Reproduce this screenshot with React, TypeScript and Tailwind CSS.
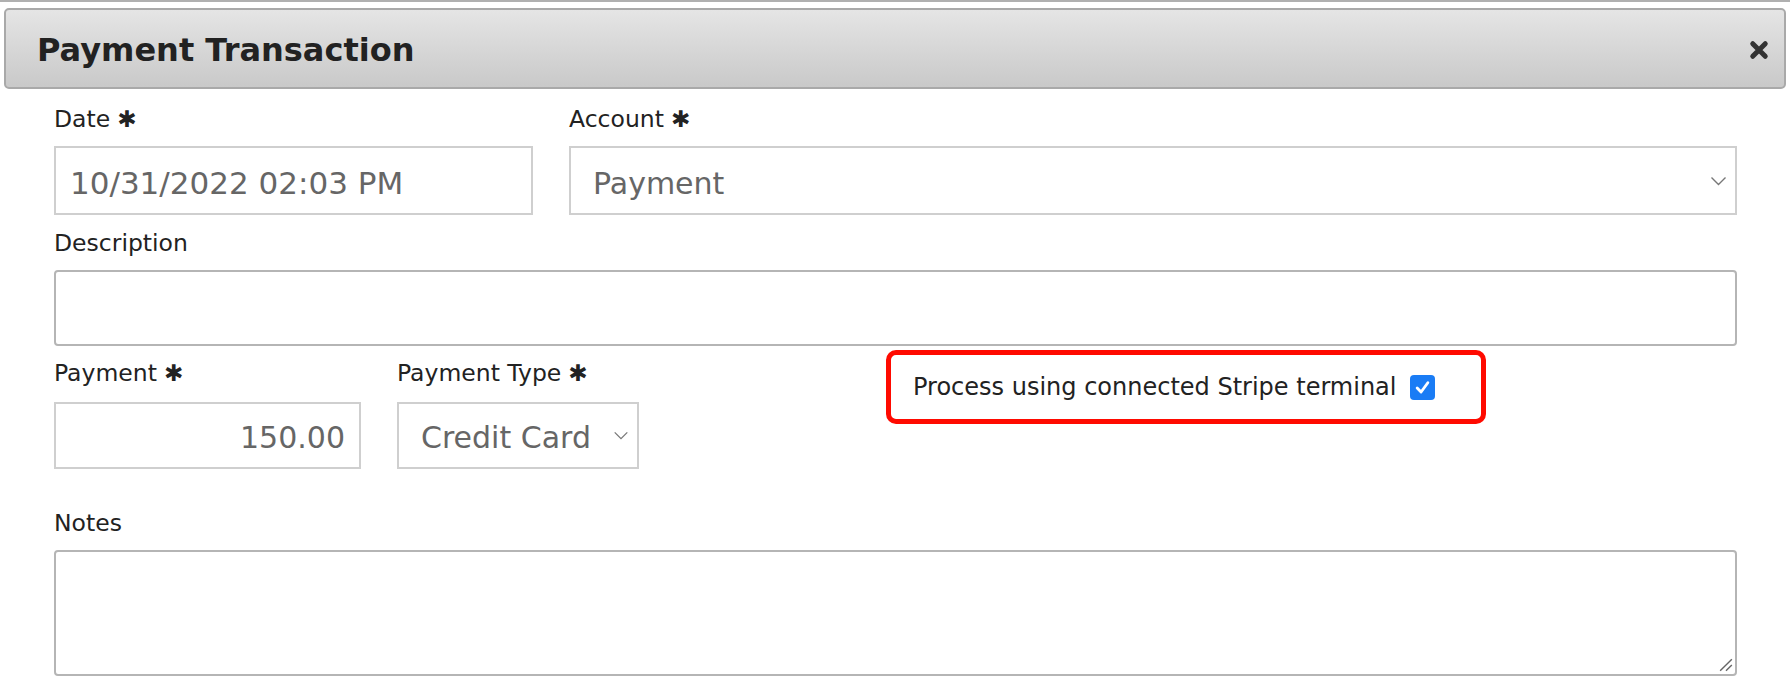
import React from 'react'

const font = "font-['DejaVu_Sans','Verdana',sans-serif]"

function Star() {
  return <span className="ml-[7px] text-[23px] text-[#222] font-bold">✱</span>
}

function Chevron({ className = '' }: { className?: string }) {
  return (
    <svg viewBox="0 0 16 10" className={className} fill="none" stroke="#777" strokeWidth="1.4">
      <path d="M1 1.5 L8 8.5 L15 1.5" />
    </svg>
  )
}

function Label({ children }: { children: React.ReactNode }) {
  return <div className="h-[26px] leading-[26px] text-[23.5px] text-[#222] flex items-center whitespace-nowrap">{children}</div>
}

export default function App() {
  return (
    <div className={`w-[1790px] h-[688px] bg-white overflow-hidden ${font}`}>
      <div className="h-[2px] bg-[#b0b0b0]" />
      {/* header */}
      <div className="mt-[6px] mx-[4px] h-[81px] rounded-[5px] border-2 border-[#a9a9a9] bg-gradient-to-b from-[#e5e5e5] to-[#c9c9c9] flex items-center justify-between pl-[31px] pr-[15px]">
        <h1 className="pt-[2px] text-[32px] font-bold text-[#222]">Payment Transaction</h1>
        <svg viewBox="0 0 16 16" className="mt-[2px] w-[20px] h-[20px]">
          <path d="M3 3 L13 13 M13 3 L3 13" stroke="#333" strokeWidth="4" strokeLinecap="round" />
        </svg>
      </div>

      <div className="px-[54px] pr-[53px]">
        {/* row 1 */}
        <div className="mt-[17px] flex gap-[36px]">
          <div className="w-[479px]">
            <Label>Date<Star /></Label>
            <div className="mt-[14px] h-[69px] border-2 border-[#cfcfcf] flex items-center pt-[5px] px-[14px] text-[31px] text-[#666]">
              10/31/2022 02:03 PM
            </div>
          </div>
          <div className="flex-1">
            <Label>Account<Star /></Label>
            <div className="mt-[14px] h-[69px] border-2 border-[#cfcfcf] flex items-center justify-between pl-[22px] pr-[8px] text-[30px] text-[#666]">
              <span className="pt-[5px]">Payment</span>
              <Chevron className="w-[17px] h-[10px]" />
            </div>
          </div>
        </div>

        {/* row 2 */}
        <div className="mt-[15px]">
          <Label>Description</Label>
          <div className="mt-[14px] h-[76px] rounded-[4px] border-2 border-[#b5b5b5]" />
        </div>

        {/* row 3 */}
        <div className="flex items-start">
          <div className="mt-[14px] w-[307px]">
            <Label>Payment<Star /></Label>
            <div className="mt-[16px] h-[67px] border-2 border-[#cfcfcf] flex items-center justify-end pt-[4px] px-[14px] text-[30px] text-[#666]">
              150.00
            </div>
          </div>
          <div className="mt-[14px] ml-[36px] w-[242px]">
            <Label>Payment Type<Star /></Label>
            <div className="mt-[16px] h-[67px] border-2 border-[#cfcfcf] flex items-center justify-between pl-[22px] pr-[8px] text-[30px] text-[#666] whitespace-nowrap">
              <span className="pt-[4px]">Credit Card</span>
              <Chevron className="w-[16px] h-[9px]" />
            </div>
          </div>
          <div className="mt-[4px] ml-[247px] w-[600px] h-[74px] rounded-[10px] border-[5px] border-[#ff0a00] flex items-center pl-[22px] text-[24px] text-[#222] whitespace-nowrap">
            <span>Process using connected Stripe terminal</span>
            <span className="ml-[13px] w-[25px] h-[25px] rounded-[4px] bg-[#1a7cf5] flex items-center justify-center">
              <svg viewBox="0 0 16 16" className="w-[19px] h-[19px]">
                <path d="M3.5 8.5 L6.8 11.8 L12.5 4" fill="none" stroke="white" strokeWidth="2.4" strokeLinecap="round" strokeLinejoin="round" />
              </svg>
            </span>
          </div>
        </div>

        {/* row 4 */}
        <div className="mt-[41px]">
          <Label>Notes</Label>
          <div className="relative mt-[14px] h-[126px] rounded-[4px] border-2 border-[#b5b5b5]">
            <svg viewBox="0 0 12 12" className="absolute right-[2px] bottom-[2px] w-[14px] h-[14px]">
              <path d="M1 11 L11 1 M6 11 L11 6" stroke="#666" strokeWidth="1.2" />
            </svg>
          </div>
        </div>
      </div>
    </div>
  )
}
